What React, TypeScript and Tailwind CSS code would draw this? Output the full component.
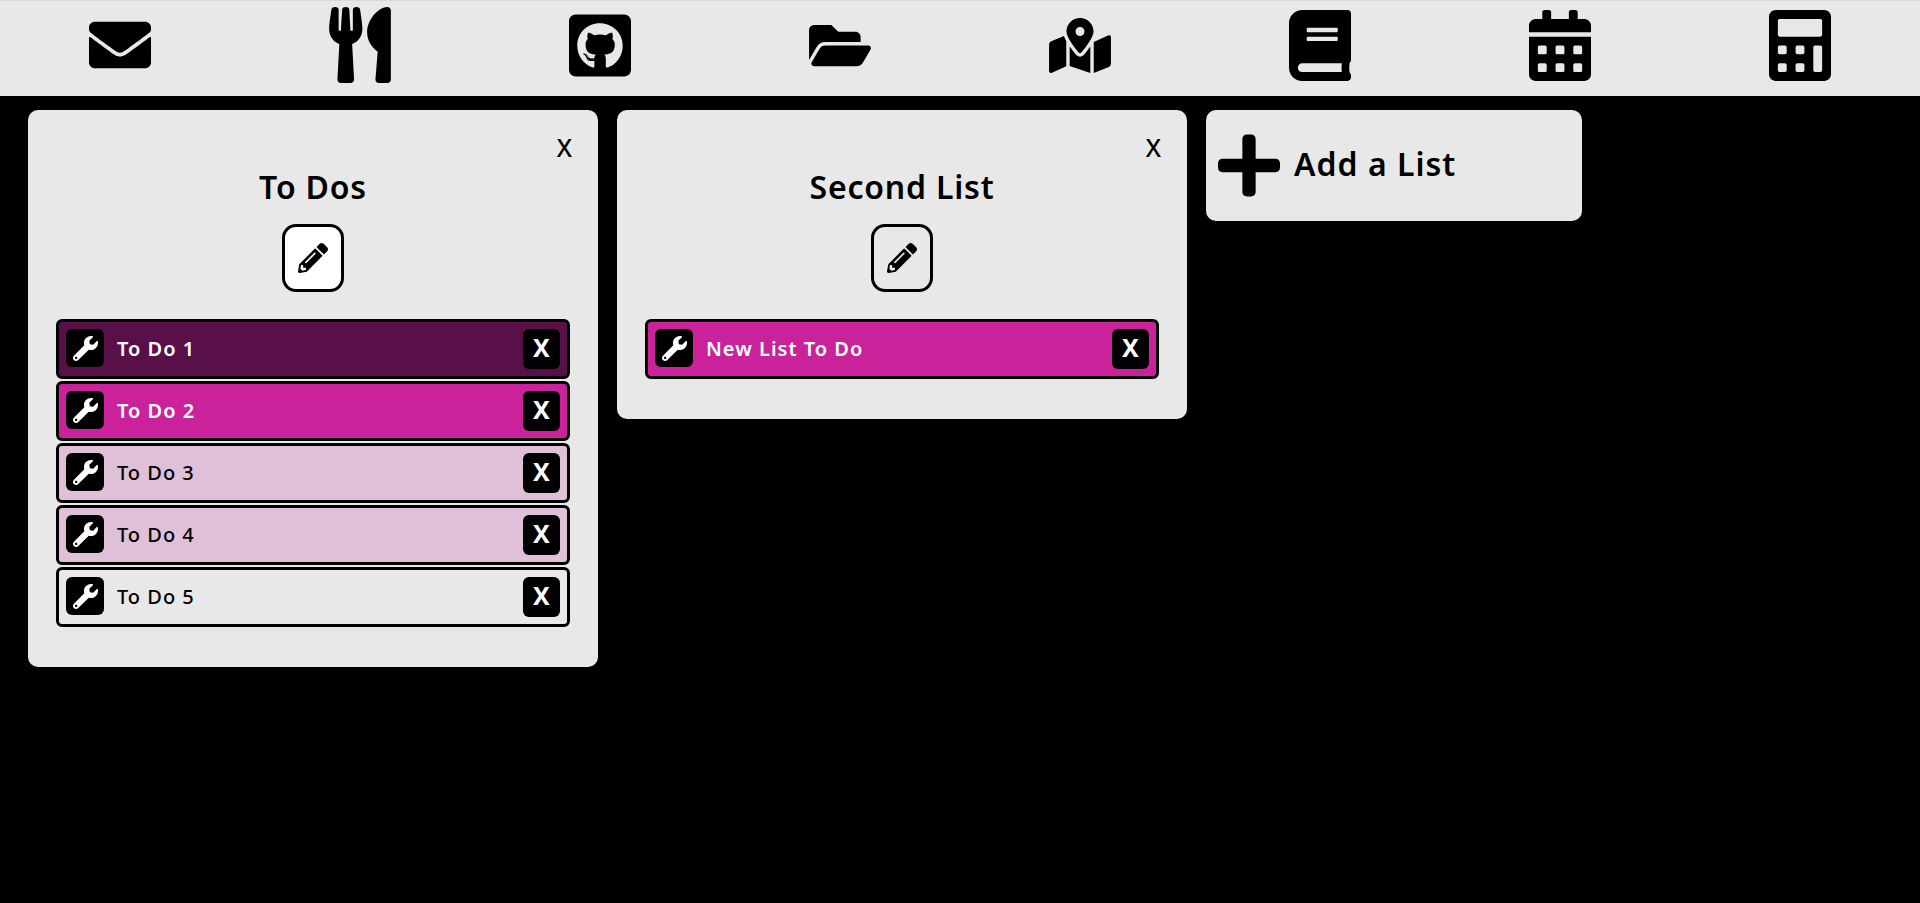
import React from 'react';
import {
  FaEnvelope,
  FaUtensils,
  FaGithubSquare,
  FaFolderOpen,
  FaMapMarkedAlt,
  FaBook,
  FaCalendarAlt,
  FaCalculator,
  FaWrench,
  FaPencilAlt,
  FaPlus,
} from 'react-icons/fa';

const NAV_ICONS = [
  { Icon: FaEnvelope, size: 'h-[62px]' },
  { Icon: FaUtensils, size: 'h-[76px]' },
  { Icon: FaGithubSquare, size: 'h-[71px]' },
  { Icon: FaFolderOpen, size: 'h-[55px]' },
  { Icon: FaMapMarkedAlt, size: 'h-[55px]' },
  { Icon: FaBook, size: 'h-[71px]' },
  { Icon: FaCalendarAlt, size: 'h-[71px]' },
  { Icon: FaCalculator, size: 'h-[71px]' },
];

const RowTones = {
  dark: 'bg-[#590f47] text-white font-semibold',
  hot: 'bg-[#c9229b] text-white font-semibold',
  pale: 'bg-[#e0bfd8] text-black font-medium',
  plain: 'bg-[#e8e8e8] text-black font-medium',
};

type Tone = keyof typeof RowTones;

const TodoRow = ({ label, tone }: { label: string; tone: Tone }) => (
  <div
    className={`flex h-[60px] items-center rounded-[6px] border-[3px] border-black pr-[7px] pl-[7px] ${RowTones[tone]}`}
  >
    <div className="mb-[2px] flex h-[38px] w-[38px] items-center justify-center rounded-[6px] bg-black text-white">
      <FaWrench className="h-[25px] w-[25px]" />
    </div>
    <span className="ml-[13px] flex-1 text-[20px] tracking-[1px]">{label}</span>
    <div className="flex h-[40px] w-[37px] items-center justify-center rounded-[6px] bg-black pb-[3px] text-[25px] font-bold text-white">
      X
    </div>
  </div>
);

const ListCard = ({
  title,
  editBg,
  rows,
}: {
  title: string;
  editBg: string;
  rows: { label: string; tone: Tone }[];
}) => (
  <div className="w-[570px] rounded-[10px] bg-[#e8e8e8] px-[28px] pt-[19px] pb-[40px]">
    <div className="flex justify-end text-[25px] leading-[36px]">
      <span className="-mr-[2px] font-medium">X</span>
    </div>
    <h2 className="text-center text-[32px] leading-[44px] font-semibold tracking-[0.8px]">
      {title}
    </h2>
    <div className="mt-[15px] flex justify-center">
      <div
        className={`flex h-[68px] w-[62px] items-center justify-center rounded-[14px] border-[3px] border-black ${editBg}`}
      >
        <FaPencilAlt className="h-[30px] w-[30px]" />
      </div>
    </div>
    <div className="mt-[27px] flex flex-col gap-[2px]">
      {rows.map((row) => (
        <TodoRow key={row.label} label={row.label} tone={row.tone} />
      ))}
    </div>
  </div>
);

const App = () => {
  return (
    <div className="min-h-[903px] bg-black font-['Noto_Sans',sans-serif] text-black">
      {/* Top nav */}
      <div className="grid h-[96px] grid-cols-8 items-center border-t border-[#d9d9d9] bg-[#e8e8e8] pb-[7px]">
        {NAV_ICONS.map(({ Icon, size }, i) => (
          <div key={i} className="flex justify-center">
            <Icon className={`w-[62px] ${size}`} />
          </div>
        ))}
      </div>

      {/* Lists */}
      <div className="flex items-start gap-[19px] pt-[14px] pl-[28px]">
        <ListCard
          title="To Dos"
          editBg="bg-white"
          rows={[
            { label: 'To Do 1', tone: 'dark' },
            { label: 'To Do 2', tone: 'hot' },
            { label: 'To Do 3', tone: 'pale' },
            { label: 'To Do 4', tone: 'pale' },
            { label: 'To Do 5', tone: 'plain' },
          ]}
        />
        <ListCard
          title="Second List"
          editBg="bg-[#e8e8e8]"
          rows={[{ label: 'New List To Do', tone: 'hot' }]}
        />
        <div className="flex h-[111px] w-[376px] items-center rounded-[10px] bg-[#e8e8e8] pl-[12px]">
          <FaPlus className="h-[71px] w-[62px]" />
          <span className="mb-[3px] ml-[14px] text-[32px] font-semibold tracking-[1px]">Add a List</span>
        </div>
      </div>
    </div>
  );
};

export default App;
